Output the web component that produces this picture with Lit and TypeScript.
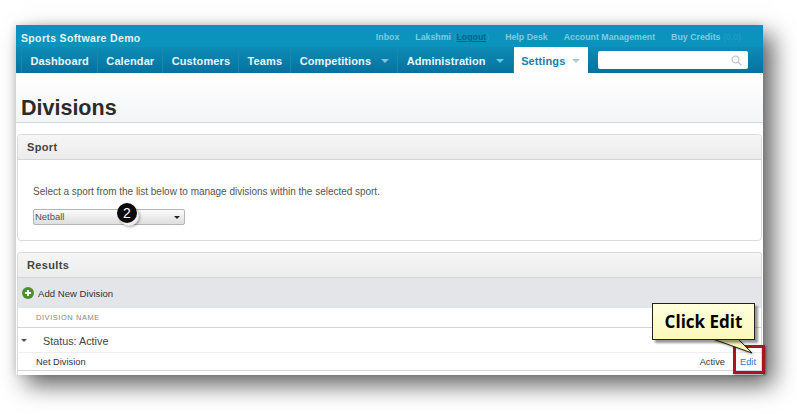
import { LitElement, html, css } from "lit";
import { customElement } from "lit/decorators.js";

@customElement("app-root")
export class AppRoot extends LitElement {
  static styles = css`
    :host { display: block; width: 797px; height: 414px; position: relative; overflow: hidden; background: #fff; font-family: "Liberation Sans", Arial, sans-serif; color: #333; }
    .page { padding: 25px 34px 0 16px; height: 414px; box-sizing: border-box; }
    .win { height: 350px; background: #fff; box-shadow: 10px 10px 22px rgba(0,0,0,.62), -2px 0 6px rgba(0,0,0,.07), 0 -2px 8px rgba(0,0,0,.05); display: flex; flex-direction: column; overflow: hidden; }
    .top { height: 22px; background: #0b93bd; display: flex; align-items: center; padding: 0 0 0 5px; flex: none; }
    .brand { color: #e6f4f9; font-weight: bold; font-size: 10.5px; letter-spacing: .35px; margin-top: 4px; }
    .links { margin-left: auto; display: flex; gap: 16px; font-size: 8.8px; font-weight: bold; color: #7fcbe3; padding-right: 22px; margin-top: 2px; }
    .links .lo { text-decoration: underline; color: #0d5f8e; }
    .links .pn { color: #2a9cc4; font-weight: normal; }
    .nav { height: 26px; background: linear-gradient(#0c8cb6, #06719f); display: flex; padding-left: 5px; align-items: stretch; flex: none; }
    .tab { display: flex; align-items: center; padding: 1px 8px 0 8.5px; color: #eaf5f9; font-weight: bold; font-size: 11px; letter-spacing: .1px; border-right: 1px solid #1a87ae; white-space: nowrap; }
    .tab:first-child { border-left: 1px solid #1a87ae; }
    .tab.d { gap: 10px; padding-right: 8px; }
    .tab.d.adm { padding-right: 9px; }
    .car { width: 0; height: 0; border-left: 4px solid transparent; border-right: 4px solid transparent; border-top: 4px solid #7cc4de; margin-top: 1px; }
    .tab.act { background: #fff; color: #1681ab; border-right: 0; gap: 7px; padding: 1px 8px 0 7.5px; }
    .tab.act .car { border-top-color: #a9cfdf; }
    .search { width: 150px; height: 18px; margin: 4px 0 0 10px; background: #fff; border-radius: 2px; display: flex; align-items: center; justify-content: flex-end; padding-right: 6px; box-sizing: border-box; }
    .head { height: 50px; flex: none; box-sizing: border-box; background: linear-gradient(#fff, #f4f5f7); border-bottom: 1px solid #d6d8da; display: flex; align-items: flex-end; padding: 0 0 1px 5px; }
    h1 { margin: 0; font-size: 21.5px; line-height: 26px; color: #2b2b2b; font-weight: bold; }
    .panel { margin: 11px 1px 0 1px; border: 1px solid #d9dadb; border-radius: 4px; background: #fff; }
    .ph { height: 25px; box-sizing: border-box; background: linear-gradient(#f6f6f6, #ececec); border-bottom: 1px solid #d4d5d6; font-weight: bold; font-size: 11px; letter-spacing: .35px; color: #444; display: flex; align-items: center; padding-left: 9px; border-radius: 4px 4px 0 0; }
    .sbody { height: 80px; box-sizing: border-box; padding: 26px 0 0 15px; font-size: 10px; letter-spacing: -.02px; color: #555; line-height: 12px; }
    .sel { position: relative; width: 152px; height: 16px; margin-top: 11px; box-sizing: border-box; border: 1px solid #b5b5b5; border-radius: 2px; background: linear-gradient(#fbfbfb, #dedede); font-size: 9.5px; line-height: 14px; padding-left: 1px; color: #555; }
    .sel::after { content: ""; position: absolute; right: 4px; top: 6px; border-left: 3px solid transparent; border-right: 3px solid transparent; border-top: 3px solid #222; }
    .badge { position: absolute; left: 117px; top: 203px; width: 20px; height: 20px; border-radius: 50%; background: #0a0a0a; color: #fff; font-size: 14px; line-height: 20px; text-align: center; box-shadow: 2px 3px 0 #eee, 3px 4px 3px rgba(0,0,0,.35); }
    .results { margin-top: 11px; border-bottom: 0; flex: 1; border-radius: 4px 4px 0 0; }
    .add { height: 30px; background: #e3e5e9; display: flex; align-items: center; padding-left: 4px; gap: 4px; font-size: 9.6px; color: #333; }
    .cols { height: 20px; box-sizing: border-box; border-bottom: 1px solid #d4d5d6; font-size: 7.5px; letter-spacing: .55px; color: #888; display: flex; align-items: center; padding-left: 18px; }
    .status { height: 24px; box-sizing: border-box; display: flex; align-items: center; font-size: 10.8px; color: #444; padding: 1px 0 0 3px; }
    .status .car2 { border-left: 3px solid transparent; border-right: 3px solid transparent; border-top: 3px solid #555; margin-right: 16px; }
    .net { height: 19px; box-sizing: border-box; border-top: 1px solid #eee; border-bottom: 1px solid #d4d5d6; display: flex; align-items: center; font-size: 9.3px; color: #333; padding-left: 18px; }
    .net .st { margin-left: auto; }
    .net .ed { color: #3674c8; margin: 0 5px 0 15px; }
    .red { position: absolute; left: 733px; top: 345px; width: 32px; height: 29px; box-sizing: border-box; border: 3.5px solid #a8141f; box-shadow: 1px 1px 2px rgba(0,0,0,.4); }
    .tail { position: absolute; left: 700px; top: 336px; }
    .call { position: absolute; left: 652px; top: 303px; width: 103px; height: 37px; box-sizing: border-box; border: 1px solid #222; background: linear-gradient(#ffffe0, #fbf8b8); box-shadow: 3px 3px 2px rgba(0,0,0,.4); display: flex; align-items: center; justify-content: center; font-family: "Open Sans", sans-serif; font-weight: bold; font-size: 17px; color: #000; }
  `;

  render() {
    return html`
      <div class="page">
        <div class="win">
          <div class="top">
            <div class="brand">Sports Software Demo</div>
            <div class="links">
              <span>Inbox</span>
              <span>Lakshmi <span class="pn">(</span><span class="lo">Logout</span><span class="pn">)</span></span>
              <span>Help Desk</span>
              <span>Account Management</span>
              <span>Buy Credits <span class="pn">(0.0)</span></span>
            </div>
          </div>
          <div class="nav">
            <div class="tab">Dashboard</div>
            <div class="tab">Calendar</div>
            <div class="tab">Customers</div>
            <div class="tab">Teams</div>
            <div class="tab d">Competitions <i class="car"></i></div>
            <div class="tab d adm">Administration <i class="car"></i></div>
            <div class="tab d act">Settings <i class="car"></i></div>
            <div class="search">
              <svg width="11" height="11" viewBox="0 0 11 11" fill="none" stroke="#c4c8ca" stroke-width="1.3"><circle cx="4.5" cy="4.5" r="3.4"/><path d="M7 7l3.4 3.4"/></svg>
            </div>
          </div>
          <div class="head"><h1>Divisions</h1></div>
          <div class="panel">
            <div class="ph">Sport</div>
            <div class="sbody">
              Select a sport from the list below to manage divisions within the selected sport.
              <div class="sel">Netball</div>
            </div>
          </div>
          <div class="panel results">
            <div class="ph">Results</div>
            <div class="add">
              <svg width="12" height="12" viewBox="0 0 12 12"><circle cx="6" cy="6" r="6" fill="#4c8f2f"/><path d="M6 3v6M3 6h6" stroke="#fff" stroke-width="2"/></svg>
              Add New Division
            </div>
            <div class="cols">DIVISION NAME</div>
            <div class="status"><i class="car2"></i>Status: Active</div>
            <div class="net">Net Division<span class="st">Active</span><span class="ed">Edit</span></div>
          </div>
        </div>
      </div>
      <div class="badge">2</div>
      <div class="red"></div>
      <svg class="tail" width="56" height="22" viewBox="0 0 56 22">
        <path d="M13 3L52 17L38 3Z" fill="#fbf8b8" stroke="#222" stroke-width="1" style="filter:drop-shadow(1px 1px 1px rgba(0,0,0,.4))"/>
      </svg>
      <div class="call">Click Edit</div>
    `;
  }
}
